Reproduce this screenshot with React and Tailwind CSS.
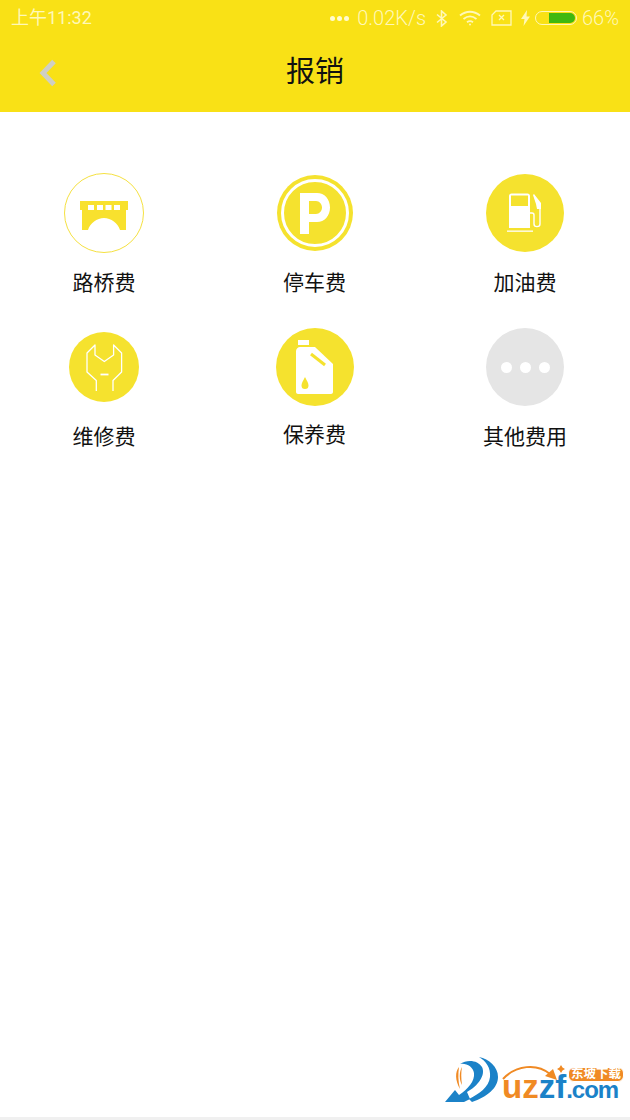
import React from "react";

const FONT = '"Roboto", "Noto Sans CJK SC", sans-serif';
const LOGO_FONT = '"Liberation Sans", "Noto Sans CJK SC", sans-serif';

const BridgeIcon = () => (
  <div className="flex h-[80px] w-[80px] items-center justify-center rounded-full border border-[#f5e142] bg-white">
    <svg width="48" height="29" viewBox="0 0 48 29" className="mt-[5px]">
      <path
        fill="#f8e12e"
        d="M0 0h48v9h-2v20h-6c-2-7-9-12-16-12S10 22 8 29H2V9H0z"
      />
      <path fill="#fff" d="M8 4h6v5H8zM17 4h6v5h-6zM25.500 4h6v5h-6zM34 4h6v5h-6z" />
    </svg>
  </div>
);

const ParkingIcon = () => (
  <div className="flex h-[76px] w-[76px] items-center justify-center rounded-full bg-[#f5e22e]">
    <div className="flex h-[68px] w-[68px] items-center justify-center rounded-full border-[3px] border-white">
      <svg width="30" height="41" viewBox="0 0 30 41">
        <path
          fill="#fff"
          fillRule="evenodd"
          d="M0 41V0h17c7.500 0 13 6 13 14.500S24.500 29 17 29H9v12zM9 8v13h7c3.500 0 6-3 6-6.500S19.500 8 16 8z"
        />
      </svg>
    </div>
  </div>
);

const FuelIcon = () => (
  <div className="flex h-[78px] w-[78px] items-center justify-center rounded-full bg-[#f5e22e]">
    <svg width="36" height="42" viewBox="0 0 36 42">
      <path fill="#fff" d="M2 4c0-1.500 1-2.500 2.500-2.500h16C22 1.500 23 2.500 23 4v32H2z" />
      <path fill="#f5e22e" d="M4 3.500h17V14H4z" />
      <path fill="#fff" d="M0 38.500h26v1.300H0z" />
      <path
        fill="none"
        stroke="#fff"
        strokeWidth="1.400"
        d="M23 21h2c1 0 2 1 2 2v9c0 3.500 6 3.500 6 0V16"
      />
      <path fill="#fff" d="M27 2l7 9v6h-4l-1-5-3-9z" />
    </svg>
  </div>
);

const WrenchIcon = () => (
  <div className="flex h-[70px] w-[70px] items-center justify-center rounded-full bg-[#f5e22e]">
    <svg
      width="37"
      height="48"
      viewBox="0 0 37 48"
      fill="none"
      stroke="#fff"
      strokeWidth="1.300"
      strokeLinejoin="round"
      className="mt-[2px]"
    >
      <path d="M10.300 47V36.500L1 28V9l8-8v10l9.300 6.500L27.600 11V1l8 8v19l-8.600 8.500V47" />
      <path d="M14.500 30.500h8" strokeWidth="1.800" />
    </svg>
  </div>
);

const OilIcon = () => (
  <div className="flex h-[78px] w-[78px] items-center justify-center rounded-full bg-[#f5e22e]">
    <svg width="37" height="54" viewBox="0 0 37 54">
      <path fill="#fff" d="M2 0h11v5H2z" />
      <path fill="#fff" d="M0 11c0-2 2-4 4-4h15l18 17v28c0 1-1 2-2 2H2c-1 0-2-1-2-2z" />
      <path fill="none" stroke="#f5e22e" strokeWidth="3" d="M15 14l14 11" />
      <path fill="#f5e22e" d="M9 37c2 4 3.500 6 3.500 8.500a3.500 3.500 0 0 1-7 0C5.500 43 7 41 9 37z" />
    </svg>
  </div>
);

const MoreIcon = () => (
  <div className="flex h-[78px] w-[78px] items-center justify-center gap-[8px] rounded-full bg-[#e5e5e5]">
    <span className="h-[11px] w-[11px] rounded-full bg-white" />
    <span className="h-[11px] w-[11px] rounded-full bg-white" />
    <span className="h-[11px] w-[11px] rounded-full bg-white" />
  </div>
);

const ITEMS = [
  { label: "路桥费", icon: <BridgeIcon />, gap: "mt-[16px]", col: "pr-[2px]" },
  { label: "停车费", icon: <ParkingIcon />, gap: "mt-[16px]", col: "pr-[1px]" },
  { label: "加油费", icon: <FuelIcon />, gap: "mt-[16px]", col: "" },
  { label: "维修费", icon: <WrenchIcon />, gap: "mt-[16px]", col: "pr-[2px]" },
  { label: "保养费", icon: <OilIcon />, gap: "mt-[14px]", col: "pr-[1px]" },
  { label: "其他费用", icon: <MoreIcon />, gap: "mt-[16px]", col: "" },
];

const StatusBar = () => (
  <div className="flex h-[36px] items-center justify-between px-[11px] leading-none text-[#fff8b8]">
    <span className="text-[18px]">上午11:32</span>
    <div className="flex items-center text-[20px] font-light">
      <div className="flex gap-[2px]">
        <span className="h-[5px] w-[5px] rounded-full bg-[#fffbd0]" />
        <span className="h-[5px] w-[5px] rounded-full bg-[#fffbd0]" />
        <span className="h-[5px] w-[5px] rounded-full bg-[#fffbd0]" />
      </div>
      <span className="ml-[8px]">0.02K/s</span>
      {/* bluetooth */}
      <svg className="ml-[10px]" width="12" height="17" viewBox="0 0 12 17" fill="none" stroke="#fff8b8" strokeWidth="1.600">
        <path d="M1 4.500l9 7.500-4.500 4V1L10 5 1 12.500" />
      </svg>
      {/* wifi */}
      <svg className="ml-[11px]" width="22" height="16" viewBox="0 0 22 16" fill="none" stroke="#fff8b8" strokeWidth="1.800">
        <path d="M1 5.500c6-5 14-5 20 0M4.500 9c4-3.300 9-3.300 13 0M8 12.300c2-1.500 4-1.500 6 0" />
        <circle cx="11" cy="14.500" r="1" fill="#fff8b8" stroke="none" />
      </svg>
      {/* no sim */}
      <svg className="ml-[10px]" width="21" height="16" viewBox="0 0 21 16" fill="none" stroke="#fff8b8" strokeWidth="1.300">
        <path d="M5 1h15v14H1V5z" />
        <path d="M8 5l5 5M13 5l-5 5" />
      </svg>
      {/* charging bolt */}
      <svg className="ml-[9px]" width="9" height="16" viewBox="0 0 9 16">
        <path fill="#fff8b8" d="M6 0L0 9h3.500L2.500 16 9 6.500H5.500z" />
      </svg>
      <div className="ml-[5px] flex h-[14px] w-[42px] justify-end rounded-full border border-[#fff8b8] p-[1px]">
        <div className="h-full w-[26px] rounded-r-full bg-[#3fb80f]" />
      </div>
      <span className="ml-[5px]">66%</span>
    </div>
  </div>
);

const Watermark = () => (
  <div
    className="absolute bottom-[8px] left-[445px] h-[60px] w-[180px] font-bold"
    style={{ fontFamily: LOGO_FONT }}
  >
    <svg className="absolute left-0 top-0" width="60" height="60" viewBox="0 0 60 60">
      <path fill="#1b82c8" d="M34 5c10 2 19 10 19 20 0 11-11 20-26 25l-3-3c10-5 20-12 21-22 1-9-4-16-11-20z" />
      <path fill="#1b82c8" d="M15 12c7-5 18-4 22 3 4 8-4 19-15 25l3 7-6 3H0l10-12 4 5c9-6 16-14 15-22-1-6-7-10-14-9z" />
      <path fill="#f08a24" d="M14 15c-4 5-4 13 1 22-2-8-2-15-1-22zM17 15c-3 5-3 13 0 18-1-7-1-13 0-18z" />
    </svg>
    {/* arrow over the letters */}
    <svg className="absolute left-[57px] top-[12px]" width="66" height="18" viewBox="0 0 66 18" fill="none">
      <path stroke="#f08a24" strokeWidth="2" d="M1 15C14 1 35-1 48 10" />
      <path fill="#f08a24" d="M43 12l12 4-4-11z" />
      <path fill="#f08a24" d="M59 1l1.500 2.500L63 5l-2.500 1.500L59 9l-1.500-2.500L55 5l2.500-1.500z" />
    </svg>
    <div className="absolute left-[57px] top-[17px] flex items-baseline text-[33px] leading-[36px]">
      <span className="text-[#f08a24]">uz</span>
      <span className="text-[#1b82c8]">zf</span>
      <span className="text-[24px] tracking-[-1px] text-[#1b82c8]">.com</span>
    </div>
    <span className="absolute left-[123px] top-[15px] whitespace-nowrap rounded-[6px] border border-white bg-[#f08a24] px-[2px] text-[12.500px] leading-[13px] text-white">
      东坡下载
    </span>
  </div>
);

export default function App() {
  return (
    <div
      className="relative flex h-[1120px] w-[630px] flex-col overflow-hidden bg-white"
      style={{ fontFamily: FONT }}
    >
      <header className="h-[112px] bg-[#f9e116]">
        <StatusBar />
        <div className="relative flex h-[76px] items-center justify-center pb-[3px]">
          <svg className="absolute left-[38px] top-[23px]" width="19" height="28" viewBox="0 0 19 28" fill="none">
            <path stroke="#cfcfc4" strokeWidth="5" d="M16 2.500L5 14l11 11.500" />
          </svg>
          <h1 className="text-[29px] font-normal leading-none text-[#111]">报销</h1>
        </div>
      </header>

      <main className="grid grid-cols-3 pt-[61px]">
        {ITEMS.map((item) => (
          <div key={item.label} className={`flex h-[154px] flex-col items-center ${item.col}`}>
            <div className="flex h-[80px] items-center justify-center">{item.icon}</div>
            <span className={`${item.gap} text-[21px] leading-[28px] text-[#111]`}>{item.label}</span>
          </div>
        ))}
      </main>

      <div className="mt-auto h-[3px] bg-[#f0f0f0]" />
      <Watermark />
    </div>
  );
}
